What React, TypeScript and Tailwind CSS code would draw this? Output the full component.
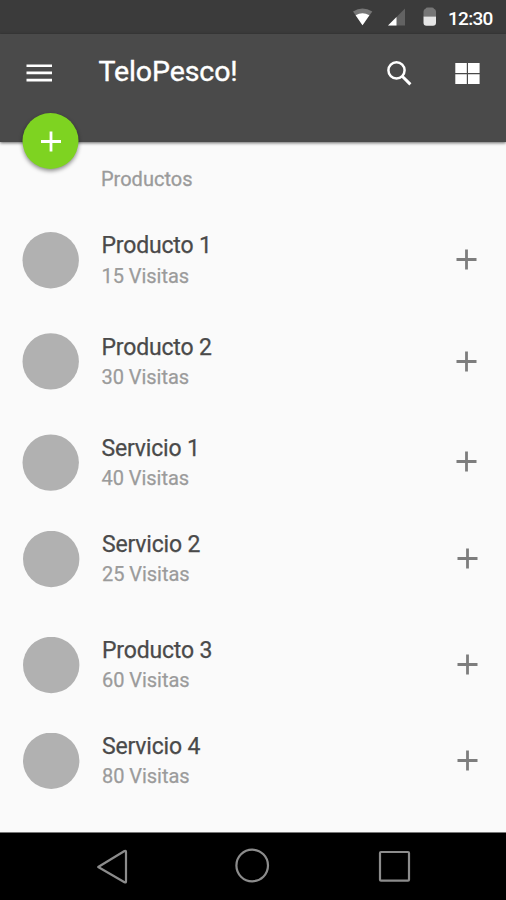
type Item = {
  name: string;
  visits: number;
  cx: number;
  cy: number;
  row: string;
  text: string;
  plus: string;
};

const items: Item[] = [
  { name: 'Producto 1', visits: 15, cx: 28.7, cy: 28.2, row: '', text: 'ml-[21.5px] gap-[4px]', plus: 'mt-[17px] mr-px' },
  { name: 'Producto 2', visits: 30, cx: 28.7, cy: 28.4, row: 'mt-[45px]', text: 'ml-[21.5px] gap-[3px] pt-px', plus: 'mt-[18px] mr-px' },
  { name: 'Servicio 1', visits: 40, cx: 28.7, cy: 28.6, row: 'mt-[45px]', text: 'ml-[21.5px] gap-[3px] pt-px', plus: 'mt-[17px] mr-px' },
  { name: 'Servicio 2', visits: 25, cx: 29.2, cy: 28, row: 'mt-[41px]', text: 'ml-[22px] gap-[3px]', plus: 'mt-[17px] mr-[0.5px]' },
  { name: 'Producto 3', visits: 60, cx: 29.2, cy: 28, row: 'mt-[50px]', text: 'ml-[22px] gap-[3px]', plus: 'mt-[17px] mr-[0.5px]' },
  { name: 'Servicio 4', visits: 80, cx: 29.2, cy: 27.8, row: 'mt-[40px]', text: 'ml-[22px] gap-[3px]', plus: 'mt-[17px] mr-[0.5px]' },
];

function PlusIcon({ className }: { className: string }) {
  return (
    <svg viewBox="0 0 21 21" className={className} fill="none" stroke="currentColor" strokeWidth="2.8">
      <path d="M10.5 .5v20M.5 10.5h20" />
    </svg>
  );
}

function StatusBar() {
  return (
    <div className="flex h-[34px] items-start bg-[#3b3b3b] pl-[352px] text-white">
      <svg width="84" height="34" viewBox="352 0 84 34" fill="currentColor">
        <path d="M353 11.5Q362.5 5.3 372.3 11.5L362.5 25.2z" opacity=".3" />
        <path d="M355.6 15.2Q362.5 11.3 369.4 15.2L362.5 25.2z" />
        <path d="M405 8.5V25.5H388z" opacity=".2" />
        <path d="M396.5 17V25.5H388z" />
        <path d="M423.5 16.5v-5a3 3 0 0 1 2-2.8Q426 7.5 427.5 7.5h4.500q1.5 0 2 1.2a3 3 0 0 1 2 2.8v5z" opacity=".3" />
        <path d="M423.5 16.5H436V22.8a3 3 0 0 1-3 3h-6.5a3 3 0 0 1-3-3z" opacity=".87" />
      </svg>
      <span className="ml-3 pt-[7px] text-[19px] leading-6 font-medium tracking-[-0.7px]">12:30</span>
    </div>
  );
}

function Toolbar() {
  return (
    <header className="relative h-[108px] bg-[#4a4a4a] text-white shadow-[0_1px_3px_rgba(0,0,0,0.6)]">
      <div className="flex h-[78px] items-center pr-[26px] pl-[26px]">
        <svg width="26" height="18" viewBox="0 0 26 18" fill="currentColor">
          <path d="M.5 .4h25.5v2.7H.5zM.5 7.6h25.5v2.7H.5zM.5 14.8h25.5v2.7H.5z" />
        </svg>
        <h1 className="ml-[46.5px] flex-1 pb-[2px] text-[28.5px] leading-8 tracking-[-0.1px] [-webkit-text-stroke:0.4px]">
          TeloPesco!
        </h1>
        <svg width="26" height="26" viewBox="0 0 26 26" fill="none" stroke="currentColor">
          <circle cx="10.5" cy="10.3" r="8.1" strokeWidth="2.5" />
          <path d="M16.2 16.2l8.2 8.2" strokeWidth="3" />
        </svg>
        <svg className="ml-[42px]" width="26" height="22" viewBox="0 0 26 22" fill="currentColor">
          <path d="M1.3 1h11.5v10H1.3zM14 1h11.600v10H14zM1.3 12.2h11.5v9.800H1.3zM14 12.2h11.600v9.800H14z" />
        </svg>
      </div>
      <button className="absolute top-[79px] left-[22px] flex size-14 translate-x-[0.5px] items-center justify-center rounded-full bg-[#7ed321] shadow-[0_2px_4px_rgba(0,0,0,0.45)]">
        <PlusIcon className="size-[21px]" />
      </button>
    </header>
  );
}

function ProductRow({ item }: { item: Item }) {
  return (
    <li className={`flex h-14 items-start pr-7 pl-[22px] ${item.row}`}>
      <svg width="58" height="58" className="shrink-0 text-[#b1b1b1]" fill="currentColor">
        <circle cx={item.cx} cy={item.cy} r="28.2" />
      </svg>
      <div className={`flex flex-1 flex-col [-webkit-text-stroke:0.25px] ${item.text}`}>
        <span className="text-[23px] leading-[27px] tracking-[-0.17px] text-[#4a4a4a]">{item.name}</span>
        <span className="text-[20px] leading-[27px] tracking-[-0.05px] text-[#9b9b9b]">{item.visits} Visitas</span>
      </div>
      <PlusIcon className={`size-[21px] text-[#7d7d7d] ${item.plus}`} />
    </li>
  );
}

function NavBar() {
  return (
    <nav className="flex h-[68px] items-start border-t border-[#777] bg-black text-[#8c8c8c]">
      <svg width="506" height="67" viewBox="0 833 506 67" fill="none" stroke="currentColor" strokeWidth="2.2" strokeLinejoin="round">
        <path d="M98.2 867L124.5 851Q126 850.5 126 852V881.5Q126 883 124.5 882.3z" />
        <circle cx="252.2" cy="865.5" r="15.8" />
        <rect x="380" y="852" width="29" height="28.7" rx="1" />
      </svg>
    </nav>
  );
}

export default function App() {
  return (
    <div className="flex h-[900px] w-[506px] flex-col overflow-hidden bg-[#fafafa] font-[Roboto,sans-serif]">
      <StatusBar />
      <Toolbar />
      <main className="flex-1 pt-[24px]">
        <h2 className="pl-[101px] text-[20px] leading-[27px] text-[#9b9b9b] [-webkit-text-stroke:0.3px]">
          Productos
        </h2>
        <ul className="pt-[39px]">
          {items.map((item) => (
            <ProductRow key={item.name} item={item} />
          ))}
        </ul>
      </main>
      <NavBar />
    </div>
  );
}
